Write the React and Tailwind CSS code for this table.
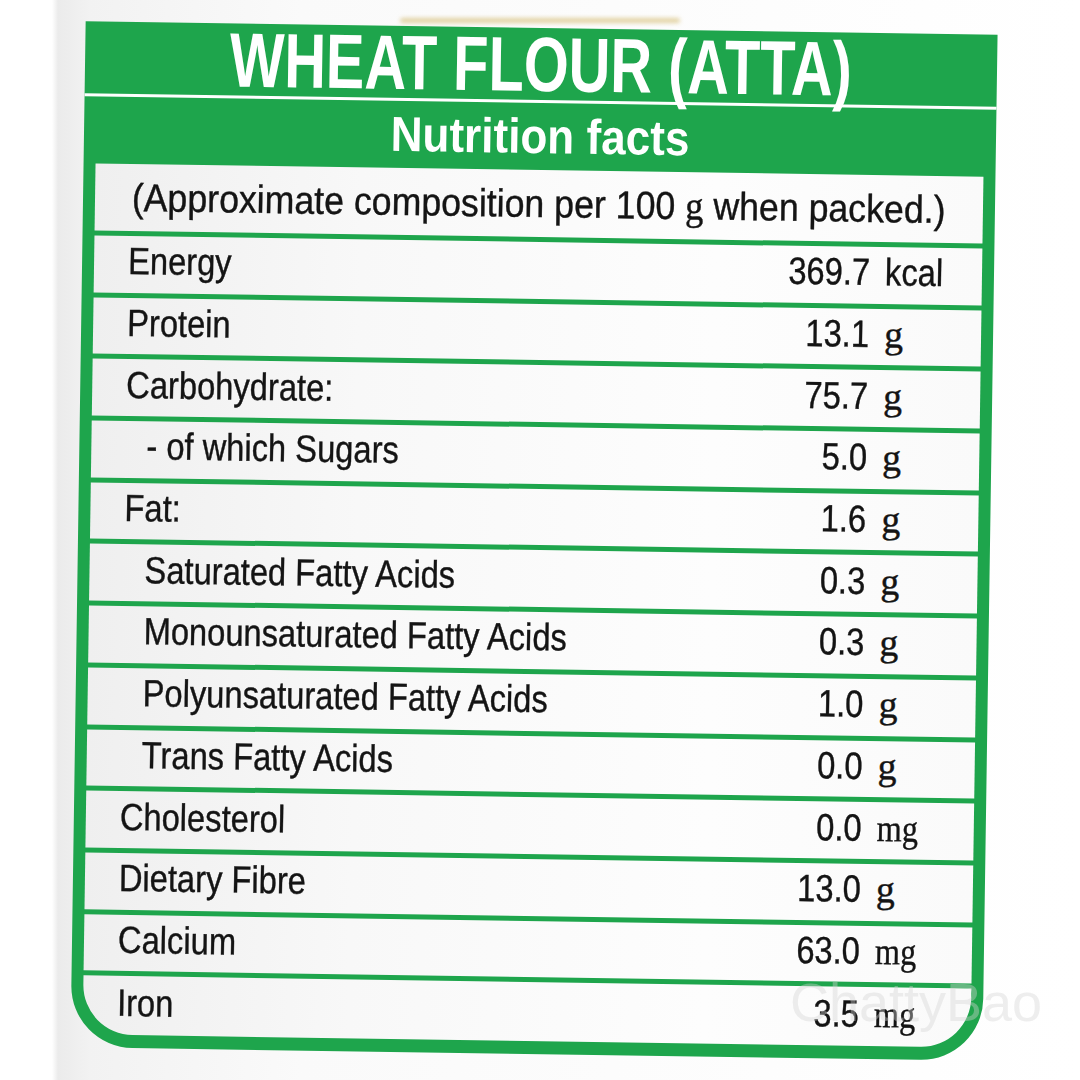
const ROWS = [
  { label: 'Energy', value: '369.7', unit: 'kcal', sansUnit: true },
  { label: 'Protein', value: '13.1', unit: 'g' },
  { label: 'Carbohydrate:', value: '75.7', unit: 'g' },
  { label: '- of which Sugars', value: '5.0', unit: 'g', indent: true },
  { label: 'Fat:', value: '1.6', unit: 'g' },
  { label: 'Saturated Fatty Acids', value: '0.3', unit: 'g', indent: true },
  { label: 'Monounsaturated Fatty Acids', value: '0.3', unit: 'g', indent: true },
  { label: 'Polyunsaturated Fatty Acids', value: '1.0', unit: 'g', indent: true },
  { label: 'Trans Fatty Acids', value: '0.0', unit: 'g', indent: true },
  { label: 'Cholesterol', value: '0.0', unit: 'mg' },
  { label: 'Dietary Fibre', value: '13.0', unit: 'g' },
  { label: 'Calcium', value: '63.0', unit: 'mg' },
  { label: 'Iron', value: '3.5', unit: 'mg' },
]

// the label print is a condensed grotesque; squeeze Liberation Sans to match
const SQUEEZE = 'inline-block whitespace-nowrap scale-x-[0.86]'

function Unit({ row }) {
  if (row.sansUnit) return <span className={`${SQUEEZE} origin-left`}>{row.unit}</span>
  if (row.unit === 'mg')
    return (
      <span className="inline-block whitespace-nowrap origin-left scale-x-[0.85] font-[Liberation_Serif,serif] text-[38px]">
        mg
      </span>
    )
  return <span className="font-[Liberation_Serif,serif] text-[38px]">g</span>
}

function Row({ row, last }) {
  return (
    <div
      className={`flex items-center bg-[linear-gradient(90deg,#efefef_0%,#f8f8f8_30%,#fdfdfd_70%,#fafafa_100%)] pb-[6px] ${
        last ? 'flex-1 rounded-b-[50px]' : 'h-[56.7px]'
      }`}
    >
      <div className="flex w-full items-baseline text-[38px] leading-none text-[#141414] [-webkit-text-stroke:0.4px_#141414]">
        <span className={`flex-1 ${row.indent ? 'pl-[55px]' : 'pl-[34px]'}`}>
          <span className={`${SQUEEZE} origin-left`}>{row.label}</span>
        </span>
        <span className="w-[150px] text-right">
          <span className={`${SQUEEZE} origin-right`}>{row.value}</span>
        </span>
        <span className="w-[112px] pl-[15px]">
          <Unit row={row} />
        </span>
      </div>
    </div>
  )
}

export default function App() {
  return (
    <div className="relative w-[1080px] h-[1080px] overflow-hidden pl-[78px] pt-[28px] bg-[linear-gradient(90deg,#ffffff_0px,#ffffff_52px,#ebebeb_58px,#f2f2f2_90px,#fafafa_300px,#ffffff_100%)] font-[Liberation_Sans,Arial,sans-serif]">
      {/* packaging smudge above the label */}
      <div className="absolute left-[400px] top-[18px] w-[280px] h-[5px] rounded-full bg-[#c9a94a] opacity-50 blur-[2px]" />

      {/* ── Label card ── */}
      <div className="w-[912px] h-[1026px] rotate-[0.85deg] bg-[#1ea54c] rounded-b-[62px] flex flex-col">
        <div className="h-[72px] flex items-center justify-center text-white font-bold text-[77px] leading-none">
          <span className="inline-block whitespace-nowrap scale-x-[0.75] origin-center">WHEAT FLOUR (ATTA)</span>
        </div>
        <div className="h-[3px] bg-white" />
        <div className="h-[67px] flex items-center justify-center text-white font-bold text-[49px] leading-none">
          <span className="inline-block whitespace-nowrap scale-x-[0.9] origin-center">Nutrition facts</span>
        </div>

        {/* Table */}
        <div className="flex-1 mx-[12px] mb-[13px] flex flex-col gap-[5px]">
          <div className="h-[67px] flex items-center justify-center bg-[linear-gradient(90deg,#efefef_0%,#f8f8f8_30%,#fdfdfd_70%,#fafafa_100%)] text-[39px] leading-none text-[#141414] [-webkit-text-stroke:0.4px_#141414]">
            <span className="inline-block whitespace-nowrap scale-x-[0.915] origin-center">
              (Approximate composition per 100 <span className="font-[Liberation_Serif,serif] text-[40px]">g</span> when packed.)
            </span>
          </div>
          {ROWS.map((row, i) => (
            <Row key={row.label} row={row} last={i === ROWS.length - 1} />
          ))}
        </div>
      </div>

      {/* watermark */}
      <div className="absolute left-[790px] top-[975px] text-[54px] leading-none text-[#d4d4d4]/40 font-[Liberation_Sans,sans-serif]">
        ChattyBao
      </div>
    </div>
  )
}
